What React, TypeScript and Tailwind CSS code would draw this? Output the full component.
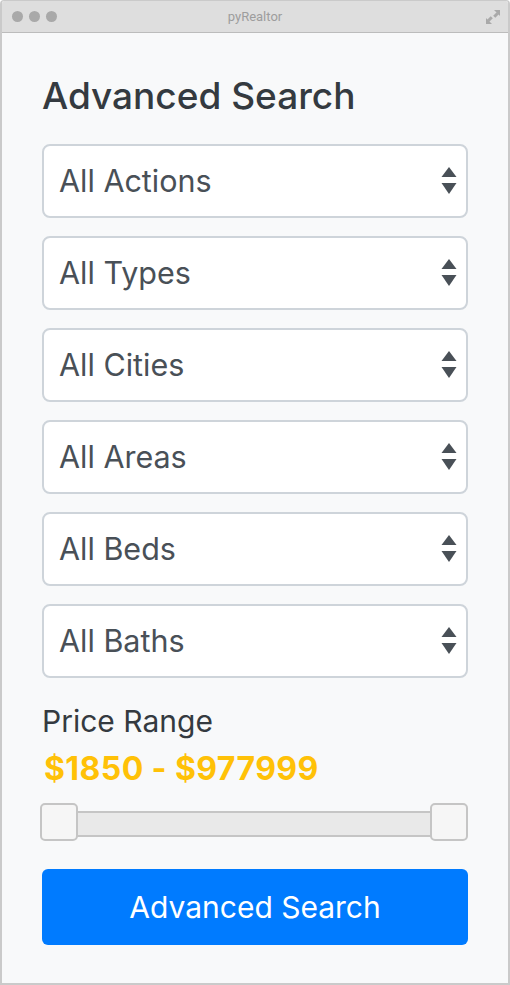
import React from "react";

const options = ["All Actions", "All Types", "All Cities", "All Areas", "All Beds", "All Baths"];

function Arrows() {
  return (
    <svg width="16" height="30" viewBox="0 0 16 30" className="shrink-0">
      <polygon points="8,1 15.5,11 0.5,11" fill="#495057" />
      <polygon points="0.5,17 15.5,17 8,28" fill="#495057" />
    </svg>
  );
}

export default function App() {
  return (
    <div
      className="w-[510px] h-[985px] flex flex-col border-x-2 border-b-2 border-t border-[#cacaca] rounded-t-[4px] overflow-hidden"
      style={{ fontFamily: "Inter, 'Noto Sans', sans-serif" }}
    >
      <div className="relative h-[32px] shrink-0 bg-[#dedede] border-b border-[#bcbcbc] flex items-center">
        <div className="flex gap-[6px] pl-[10px]">
          <span className="w-[11px] h-[11px] rounded-full bg-[#a9a9a9]" />
          <span className="w-[11px] h-[11px] rounded-full bg-[#a9a9a9]" />
          <span className="w-[11px] h-[11px] rounded-full bg-[#a9a9a9]" />
        </div>
        <div
          className="absolute inset-0 flex items-center justify-center text-[13px] text-[#9d9d9d]"
          style={{ fontFamily: "Roboto, sans-serif" }}
        >
          pyRealtor
        </div>
        <svg className="absolute right-[8px] top-[9px]" width="14" height="14" viewBox="0 0 14 14">
          <polygon points="8,0 14,0 14,6" fill="#a9a9a9" />
          <rect x="8.5" y="2.5" width="3" height="5" transform="rotate(45 10 5)" fill="#a9a9a9" />
          <polygon points="0,8 0,14 6,14" fill="#a9a9a9" />
          <rect x="2.5" y="6.5" width="3" height="5" transform="rotate(45 4 9)" fill="#a9a9a9" />
        </svg>
      </div>
      <div className="flex-1 bg-[#f8f9fa] px-[40px] pt-[40px] flex flex-col">
        <h2 className="text-[37px] leading-[46px] font-medium text-[#343a40] mb-[25px]">Advanced Search</h2>
        <div className="flex flex-col gap-[18px]">
          {options.map((o) => (
            <div
              key={o}
              className="h-[74px] bg-white border-2 border-[#ced4da] rounded-[8px] flex items-center justify-between pl-[15px] pr-[9px]"
            >
              <span className="text-[30.5px] text-[#495057]">{o}</span>
              <Arrows />
            </div>
          ))}
        </div>
        <div className="mt-[25px] text-[30px] leading-[36px] text-[#343a40]">Price Range</div>
        <div className="mt-[11px] text-[32px] leading-[38px] font-bold tracking-[0.4px] text-[#ffc107] pl-[2px]">$1850 - $977999</div>
        <div className="mt-[15px] relative h-[38px]">
          <div className="absolute left-0 right-0 top-[8px] h-[26px] bg-[#e9e9e9] border-2 border-[#c5c5c5] rounded-[3px]" />
          <div className="absolute left-[-2px] top-0 w-[38px] h-[38px] bg-[#f6f6f6] border-2 border-[#c5c5c5] rounded-[5px]" />
          <div className="absolute right-0 top-0 w-[38px] h-[38px] bg-[#f6f6f6] border-2 border-[#c5c5c5] rounded-[5px]" />
        </div>
        <button className="mt-[28px] h-[76px] w-full bg-[#007bff] rounded-[6px] text-white text-[30px]">
          Advanced Search
        </button>
      </div>
    </div>
  );
}
